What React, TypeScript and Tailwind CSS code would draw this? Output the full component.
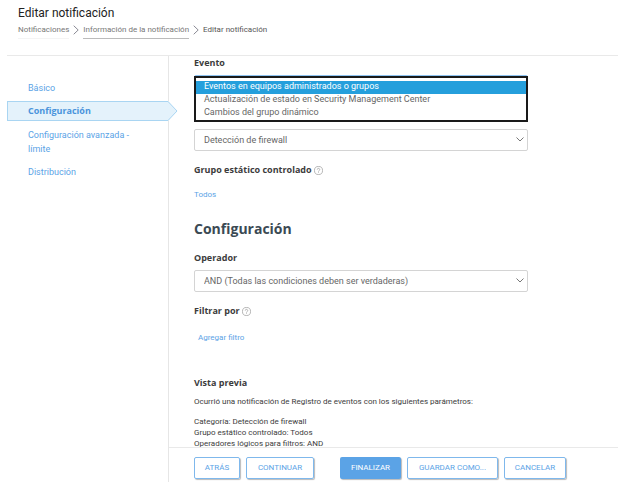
import React, { useState } from 'react';

const steps = ['Básico', 'Configuración', 'Configuración avanzada - límite', 'Distribución'];

const eventOptions = [
  'Eventos en equipos administrados o grupos',
  'Actualización de estado en Security Management Center',
  'Cambios del grupo dinámico',
];

const HelpIcon = () => (
  <svg viewBox="0 0 10 10" className="w-[9px] h-[9px] shrink-0" fill="none" stroke="#9a9a9a" strokeWidth="0.8" aria-hidden="true">
    <circle cx="5" cy="5" r="4.5" />
    <path d="M3.6 4a1.4 1.4 0 1 1 2.1 1.2c-.5.3-.7.5-.7 1M5 7v.8" />
  </svg>
);

const Separator = () => (
  <svg viewBox="0 0 6 10" className="w-1.5 h-2.5 mt-[3px] shrink-0" fill="none" stroke="#8a8a94" aria-hidden="true">
    <path d="M.7.7 5.2 5 .7 9.3" />
  </svg>
);

const SelectBox = ({ id, label, option }: { id: string; label?: string; option: string }) => (
  <div className="relative">
    <select id={id} aria-label={label} className="block w-full h-[22px] appearance-none bg-white border border-[#d4d4d4] rounded-xs pl-[9px] pt-0.5 text-[9px] text-[#666]">
      <option>{option}</option>
    </select>
    <svg viewBox="0 0 8 5" className="absolute right-1 top-2 w-2 h-[5px] pointer-events-none" fill="none" stroke="#777" aria-hidden="true">
      <path d="M.5.5 4 4 7.5.5" />
    </svg>
  </div>
);

const App = () => {
  const [event, setEvent] = useState(eventOptions[0]);

  return (
    <div className="h-screen flex flex-col bg-white font-[Roboto,'Open_Sans',sans-serif] text-[#3c3c3c] overflow-hidden">
      <header className="ml-[7px] pl-[11px] pt-1 h-14 shrink-0 border-b border-[#e9e9e9]">
        <h1 className="text-[12px] leading-[18px] text-[#222]">Editar notificación</h1>
        <nav className="flex items-start gap-1 text-[8px] leading-4 text-[#777]">
          <a href="#" className="border-b border-[#f4f4f4]">Notificaciones</a>
          <Separator />
          <a href="#" className="border-b border-[#bbb]">Información de la notificación</a>
          <Separator />
          <span className="text-[#555]">Editar notificación</span>
        </nav>
      </header>

      <div className="flex flex-1 min-h-0">
        <aside className="w-[169px] shrink-0 pl-[7px] pt-[25px] border-r border-[#e6e6e6]">
          <ul className="flex flex-col text-[9px] leading-[14px] text-[#5ba3e6]">
            <li className="pl-[21px] pb-1.5"><a href="#">{steps[0]}</a></li>
            <li className="relative h-5 pl-5 py-[2px] font-['Open_Sans',sans-serif] font-bold text-[#4a94dc] bg-[#e4f2fb] border border-r-0 border-[#a9d5f2]">
              <a href="#" aria-current="step">{steps[1]}</a>
              <svg viewBox="0 0 10 20" className="absolute -right-[10px] -top-px w-[10px] h-5" aria-hidden="true">
                <path d="M0 0 9 10 0 20Z" fill="#e4f2fb" />
                <path d="M0 .5 9 10 0 19.5" fill="none" stroke="#a9d5f2" />
              </svg>
            </li>
            <li className="pl-[21px] pr-5 pt-[7px]"><a href="#">{steps[2]}</a></li>
            <li className="pl-[21px] pt-[9px]"><a href="#">{steps[3]}</a></li>
          </ul>
        </aside>

        <main className="flex-1 min-w-0 flex flex-col">
          <form className="flex-1 min-h-0 overflow-hidden pl-[25px] pr-[90px] text-[9px]">
            <label htmlFor="event" className="block leading-[14px] font-['Open_Sans',sans-serif] font-bold">Evento</label>
            <div className="relative mt-[5px] h-[22px] border border-[#8ec3f0] rounded-xs">
              <select
                id="event"
                size={3}
                value={event}
                onChange={e => setEvent(e.target.value)}
                className="absolute -inset-x-px top-0 h-[46px] p-0 pt-[3px] bg-white border-2 border-[#1a1a1a] overflow-hidden text-[9px] text-[#666] focus:outline-none"
              >
                {eventOptions.map(o => (
                  <option key={o} className="h-[13px] min-h-0 py-0 px-2 leading-[13px] checked:bg-linear-to-r checked:from-[#259fdc] checked:to-[#259fdc] checked:text-white">{o}</option>
                ))}
              </select>
            </div>

            <div className="mt-8">
              <SelectBox id="category" label="Categoría" option="Detección de firewall" />
            </div>

            <div className="mt-3 flex items-center gap-0.5 leading-[14px] font-['Open_Sans',sans-serif] font-bold">
              Grupo estático controlado <HelpIcon />
            </div>
            <a href="#" className="block w-fit mt-3 text-[8px] leading-3 text-[#5ba3e6]">Todos</a>

            <h2 className="mt-4 text-[14px] leading-6 font-['Open_Sans',sans-serif] font-bold text-[#3b4a54]">Configuración</h2>

            <label htmlFor="operator" className="block mt-[10px] mb-[5px] leading-[14px] font-['Open_Sans',sans-serif] font-bold">Operador</label>
            <SelectBox id="operator" option="AND (Todas las condiciones deben ser verdaderas)" />

            <div className="mt-3 flex items-center gap-0.5 leading-[14px] font-['Open_Sans',sans-serif] font-bold">
              Filtrar por <HelpIcon />
            </div>
            <button type="button" className="block mt-[14px] ml-1 text-[8px] leading-3 text-[#5ba3e6]">Agregar filtro</button>

            <h3 className="mt-8 leading-[14px] font-['Open_Sans',sans-serif] font-bold">Vista previa</h3>
            <div className="mt-1.5 text-[8px] leading-[11px]">
              <p>Ocurrió una notificación de Registro de eventos con los siguientes parámetros:</p>
              <p className="mt-[9px]">Categoría: Detección de firewall</p>
              <p>Grupo estático controlado: Todos</p>
              <p>Operadores lógicos para filtros: AND</p>
            </div>
          </form>

          <footer className="shrink-0 flex gap-1.5 pl-[25px] pt-[9px] pb-[3px] border-t border-[#e9e9e9] text-[8px] text-[#5ba3e6]">
            <button className="h-[22px] w-[46px] border border-[#7fb8ec] rounded-xs shadow-[1px_1px_1px_#bbb]">ATRÁS</button>
            <button className="h-[22px] w-[68px] border border-[#7fb8ec] rounded-xs shadow-[1px_1px_1px_#bbb]">CONTINUAR</button>
            <button className="h-[22px] w-[61px] ml-5 bg-[#5ba3e6] text-white rounded-xs shadow-[1px_1px_1px_#bbb]">FINALIZAR</button>
            <button className="h-[22px] w-[91px] border border-[#7fb8ec] rounded-xs shadow-[1px_1px_1px_#bbb]">GUARDAR COMO...</button>
            <button className="h-[22px] w-[62px] border border-[#7fb8ec] rounded-xs shadow-[1px_1px_1px_#bbb]">CANCELAR</button>
          </footer>
        </main>
      </div>
    </div>
  );
};

export default App;
